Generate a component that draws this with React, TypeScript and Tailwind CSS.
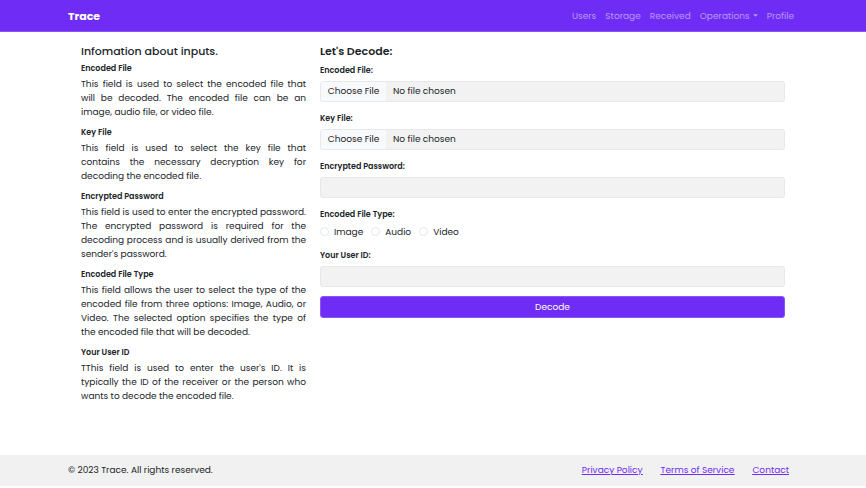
import { useId } from 'react';
import type { ReactNode } from 'react';

const help = [
  {
    title: 'Encoded File',
    text: 'This field is used to select the encoded file that will be decoded. The encoded file can be an image, audio file, or video file.',
  },
  {
    title: 'Key File',
    text: 'This field is used to select the key file that contains the necessary decryption key for decoding the encoded file.',
  },
  {
    title: 'Encrypted Password',
    text: "This field is used to enter the encrypted password. The encrypted password is required for the decoding process and is usually derived from the sender's password.",
  },
  {
    title: 'Encoded File Type',
    text: 'This field allows the user to select the type of the encoded file from three options: Image, Audio, or Video. The selected option specifies the type of the encoded file that will be decoded.',
  },
  {
    title: 'Your User ID',
    text: "TThis field is used to enter the user's ID. It is typically the ID of the receiver or the person who wants to decode the encoded file.",
  },
];

const control =
  'block h-[21px] w-full rounded-[3px] border border-[#e6e8ea] bg-[#f2f2f2] text-[9px] outline-none focus:border-[#6f2cf5]';

function Container({ children, className = '' }: { children: ReactNode; className?: string }) {
  return <div className={`mx-auto w-full max-w-[742px] ${className}`}>{children}</div>;
}

function Field({ label, type }: { label: string; type: 'file' | 'password' | 'text' }) {
  const id = useId();
  return (
    <div className="flex flex-col gap-[3px]">
      <label htmlFor={id} className="text-[8px] leading-[14px] font-semibold">
        {label}
      </label>
      <input
        id={id}
        type={type}
        className={
          type === 'file'
            ? `${control} leading-[19px] file:mr-[7px] file:h-[19px] file:w-[65px] file:rounded-none file:bg-[#f8f9fa] file:px-0 file:text-center file:text-[9px] file:text-[#212529]`
            : `${control} px-[7px]`
        }
      />
    </div>
  );
}

export default function App() {
  return (
    <div className="flex min-h-screen flex-col bg-white pb-[2px] font-[Poppins,Inter,sans-serif] text-[9px] leading-[14px] text-[#212529]">
      <header className="border-b border-[#8c56f7] bg-[#6f2cf5]">
        <Container className="flex h-[31px] items-center justify-between px-[6px]">
          <a href="#" className="text-[11px] font-bold text-white">
            Trace
          </a>
          <nav className="flex items-center gap-[9px] pr-1 text-[#b99af9]">
            <a href="#">Users</a>
            <a href="#">Storage</a>
            <a href="#">Received</a>
            <button type="button" className="flex items-center gap-[3px]">
              Operations
              <svg viewBox="0 0 6 3" className="h-[3px] w-[5px]" fill="currentColor" aria-hidden="true">
                <path d="M0 0h6L3 3z" />
              </svg>
            </button>
            <a href="#">Profile</a>
          </nav>
        </Container>
      </header>

      <main className="flex-1">
        <Container className="grid grid-cols-[225fr_465fr] gap-x-[14px] px-[19px] pt-3">
          <section>
            <h1 className="mb-[3px] text-[11px] leading-[15px] font-medium">Infomation about inputs.</h1>
            <div className="flex flex-col gap-[7px]">
              {help.map((item) => (
                <article key={item.title}>
                  <h2 className="mb-px text-[8px] font-semibold">{item.title}</h2>
                  <p className="text-justify">{item.text}</p>
                </article>
              ))}
            </div>
          </section>

          <form onSubmit={(e) => e.preventDefault()}>
            <h1 className="mb-[5px] text-[11px] leading-[15px] font-semibold">Let's Decode:</h1>
            <div className="flex flex-col gap-[10px]">
              <Field label="Encoded File:" type="file" />
              <Field label="Key File:" type="file" />
              <Field label="Encrypted Password:" type="password" />
              <fieldset>
                <legend className="mb-[2px] text-[8px] leading-[14px] font-semibold">Encoded File Type:</legend>
                <div className="flex h-[15px] items-center gap-2">
                  {['Image', 'Audio', 'Video'].map((kind) => (
                    <label key={kind} className="flex items-center gap-[5px]">
                      <input
                        type="radio"
                        name="kind"
                        value={kind}
                        className="size-[9px] appearance-none rounded-full border border-[#e4e6e8] bg-white checked:border-[3px] checked:border-[#6f2cf5]"
                      />
                      {kind}
                    </label>
                  ))}
                </div>
              </fieldset>
              <Field label="Your User ID:" type="text" />
            </div>
            <button
              type="submit"
              className="mt-[9px] h-[22px] w-full rounded-[3px] border border-[#8c56f7] bg-[#6f2cf5] text-white"
            >
              Decode
            </button>
          </form>
        </Container>
      </main>

      <footer className="bg-[#f1f1f1]">
        <Container className="flex h-[31px] items-center justify-between px-[6px] pb-px">
          <p>© 2023 Trace. All rights reserved.</p>
          <nav className="flex gap-[18px] pr-[9px] text-[#6f2cf5] underline">
            <a href="#">Privacy Policy</a>
            <a href="#">Terms of Service</a>
            <a href="#">Contact</a>
          </nav>
        </Container>
      </footer>
    </div>
  );
}
